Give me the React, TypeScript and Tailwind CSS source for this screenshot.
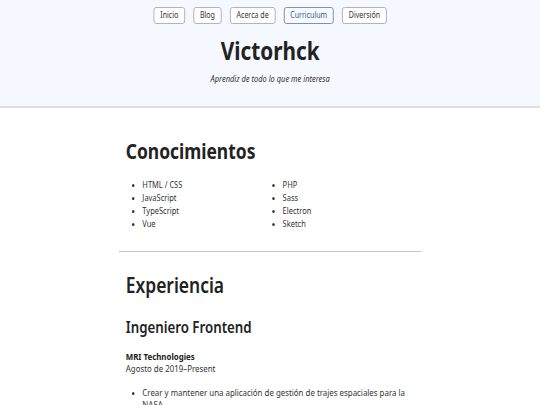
import React from "react";

const nav = ["Inicio", "Blog", "Acerca de", "Curriculum", "Diversión"];

export default function App() {
  return (
    <div className="w-[540px] h-[405px] overflow-hidden bg-white">
      <div className="w-[651px] origin-top-left scale-x-[0.83] text-[#333] [font-family:'Noto_Sans',sans-serif]">
        <header className="bg-[#f5f8ff] border-b-2 border-[#dcdee6] h-[108px] pt-[7px] flex flex-col items-center">
          <nav className="flex gap-[10px]">
            {nav.map((n) => (
              <span
                key={n}
                className={
                  "h-[17px] px-[7px] flex items-center rounded-[3px] border text-[8.5px] " +
                  (n === "Curriculum"
                    ? "border-[#6d88b4] text-[#3b5a8c] bg-[#f8faff]"
                    : "border-[#a9adb8] text-[#333] bg-white")
                }
              >
                {n}
              </span>
            ))}
          </nav>
          <h1 className="mt-[11px] text-[25px] leading-[30px] font-bold text-[#222]">Victorhck</h1>
          <p className="mt-[7px] text-[9px] italic text-[#333]">Aprendiz de todo lo que me interesa</p>
        </header>
        <main className="w-[365px] mx-auto">
          <section className="px-[8.5px] pt-[29px] pb-[21px]">
            <h2 className="text-[21px] leading-[28px] font-bold text-[#222]">Conocimientos</h2>
            <ul className="mt-[13px] pl-[20px] list-disc grid grid-cols-[169px_1fr] grid-flow-col grid-rows-4 text-[9px] leading-[13px]">
              {["HTML / CSS", "JavaScript", "TypeScript", "Vue", "PHP", "Sass", "Electron", "Sketch"].map((s) => (
                <li key={s}>{s}</li>
              ))}
            </ul>
          </section>
          <hr className="border-t border-[#c8c8c8]" />
          <section className="px-[8.5px] pt-[19px]">
            <h2 className="text-[21px] leading-[28px] font-semibold text-[#222]">Experiencia</h2>
            <h3 className="mt-[17px] text-[16px] leading-[22px] font-semibold text-[#222]">Ingeniero Frontend</h3>
            <p className="mt-[13px] text-[9.5px] leading-[12px] font-bold text-[#222]">MRI Technologies</p>
            <p className="text-[9.5px] leading-[12px]">Agosto de 2019–Present</p>
            <ul className="mt-[12px] pl-[20px] list-disc text-[9.5px] leading-[12px]">
              <li>Crear y mantener una aplicación de gestión de trajes espaciales para la NASA</li>
            </ul>
          </section>
        </main>
      </div>
    </div>
  );
}
